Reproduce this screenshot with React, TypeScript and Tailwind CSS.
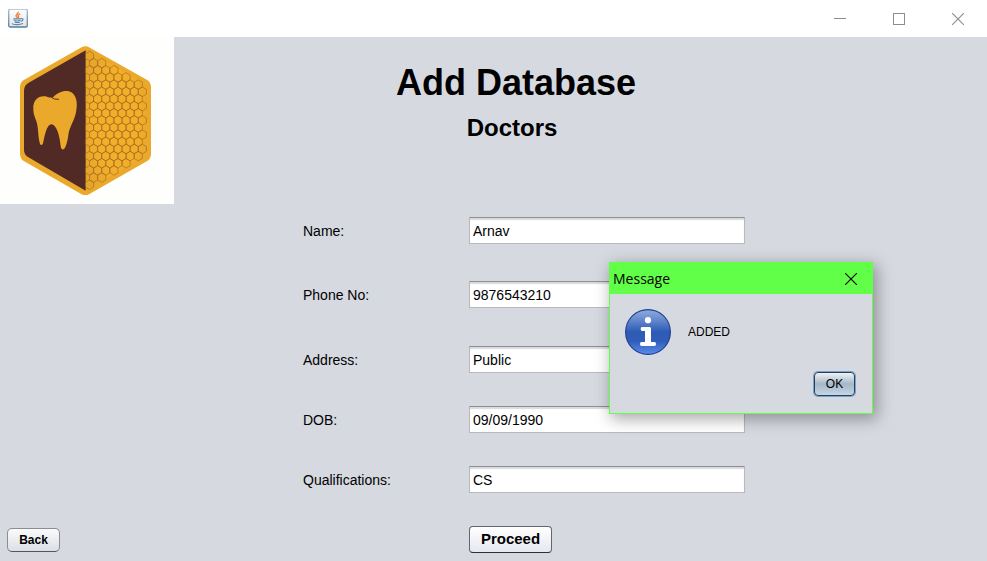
import React, { useState } from "react";

const CELLS_PER_ROW = [1, 2, 4, 5, 7, 7, 7, 7, 7, 7, 7, 7, 7, 7, 7, 5, 4, 2, 1];

function cellPath(cx: number, cy: number) {
  return `M${cx} ${cy - 14.3}L${cx + 12.2} ${cy - 7.1}V${cy + 7.1}L${cx} ${cy + 14.3}L${cx - 12.2} ${cy + 7.1}V${cy - 7.1}Z`;
}

const HONEYCOMB = CELLS_PER_ROW.map((count, row) => {
  const startX = row % 2 === 0 ? 268.5 : 280.7;
  return Array.from({ length: count }, (_, i) => cellPath(startX + i * 24.4, 168 + row * 21.45)).join("");
}).join("");

function ClinicLogo() {
  return (
    <svg viewBox="0 111 522 501" className="block w-[174px] h-[167px] bg-[#fefefd]" role="img" aria-label="Clinic logo">
      <defs>
        <radialGradient id="gold" cx="0.5" cy="0.5" r="0.6">
          <stop offset="0.6" stopColor="#f3af29" />
          <stop offset="1" stopColor="#e6a42a" />
        </radialGradient>
      </defs>
      <path d="M256 164L428 261V462L256 560L85 462V261Z" fill="#eba92c" stroke="#eba92c" strokeWidth="50" strokeLinejoin="round" />
      <path d="M257 151L428 248Q440 256 440 268V454Q440 466 428 474L257 571Z" fill="url(#gold)" />
      <path d="M257 151L86 248Q72 256 72 272V450Q72 464 84 471L257 572Z" fill="#522a25" />
      <path d={HONEYCOMB} fill="none" stroke="#a06a1f" strokeWidth="1.9" />
      <path
        d="M100 327C98 297 120 284 141 290C150 293 155 294 161 290C174 276 198 267 214 277C231 288 233 311 228 337C222 366 208 380 205 405C202 428 197 442 192 447C187 451 183 446 182 438C179 408 171 376 155 373C139 374 134 409 129 430C126 438 121 436 119 428C113 402 116 382 108 361C102 345 100 338 100 327Z"
        fill="#eba92c"
      />
      <path d="M154 292Q162 299 177 298" fill="none" stroke="#522a25" strokeWidth="3" />
    </svg>
  );
}

function JavaIcon() {
  return (
    <svg viewBox="0 0 20 20" className="block size-5" aria-hidden="true">
      <defs>
        <linearGradient id="tile" x2="0" y2="1">
          <stop offset="0" stopColor="#ffffff" />
          <stop offset="1" stopColor="#dfe3e8" />
        </linearGradient>
        <linearGradient id="tileEdge" x2="0" y2="1">
          <stop offset="0" stopColor="#a9bccb" />
          <stop offset="1" stopColor="#577b9a" />
        </linearGradient>
      </defs>
      <rect x="0.7" y="0.2" width="18.6" height="17.8" rx="1.6" fill="url(#tile)" stroke="url(#tileEdge)" strokeWidth="1.3" />
      <path d="M10.2 2.8C11 4.8 7 5.6 8.2 7.4L9.3 8.9M12.3 4.9C9.5 6 9.6 6.9 10.6 7.9L10 9.1" fill="none" stroke="#ee8642" strokeWidth="1.5" />
      <path d="M5.3 9.9H13M6 11.5Q9 12.5 12.4 11.5M6.8 13.2Q9 13.9 11.8 13.2M13 9.7C16 8.9 15.5 11.9 12.6 12.3M4 14.5C5 16 12.5 16 15 14.4" fill="none" stroke="#5d87a8" strokeWidth="1.1" />
    </svg>
  );
}

function InfoIcon() {
  return (
    <svg viewBox="0 0 46 46" className="block size-[46px]" aria-hidden="true">
      <defs>
        <linearGradient id="info" x2="0" y2="1">
          <stop offset="0" stopColor="#90acdf" />
          <stop offset="0.25" stopColor="#5f86cb" />
          <stop offset="0.5" stopColor="#2d5bb5" />
          <stop offset="0.7" stopColor="#2f5db9" />
          <stop offset="1" stopColor="#5b8ceb" />
        </linearGradient>
      </defs>
      <circle cx="23" cy="23" r="22.4" fill="url(#info)" stroke="#1f3f8f" strokeWidth="1.1" />
      <circle cx="23" cy="11.2" r="3.1" fill="#fff" />
      <path d="M17 18H24.5Q26 18 26 19.5V33H29.5Q31 33 31 35Q31 37 29.5 37H16.5Q15 37 15 35Q15 33 16.5 33H20V22H17Q15.7 22 15.7 20Q15.7 18 17 18Z" fill="#fff" />
    </svg>
  );
}

function CloseGlyph() {
  return (
    <svg viewBox="0 0 12 12" className="block size-3" aria-hidden="true">
      <path d="M0 0L12 12M12 0L0 12" stroke="currentColor" strokeWidth="1.1" />
    </svg>
  );
}

function TitleBar() {
  return (
    <header className="flex h-[37px] shrink-0 items-center justify-between bg-white pl-2 text-[#8c8c8c]">
      <JavaIcon />
      <div className="flex h-9">
        <button type="button" aria-label="Minimize" className="flex w-[59px] items-center justify-center">
          <span className="h-px w-3 bg-current" />
        </button>
        <button type="button" aria-label="Maximize" className="flex w-[59px] items-center justify-center">
          <span className="size-3 border border-current" />
        </button>
        <button type="button" aria-label="Close window" className="flex w-[59px] items-center justify-center">
          <CloseGlyph />
        </button>
      </div>
    </header>
  );
}

type FieldProps = { id: string; label: string; value: string; gap: string };

function Field({ id, label, value, gap }: FieldProps) {
  return (
    <div className={`flex items-center ${gap}`}>
      <label htmlFor={id} className="w-[166px] text-sm">
        {label}
      </label>
      <input
        id={id}
        type="text"
        defaultValue={value}
        className="h-[27px] w-[276px] border border-[#b9b9bb] border-t-[#8d8e91] bg-white px-[3px] text-sm shadow-[inset_0_2px_1px_#d9dadd] outline-none"
      />
    </div>
  );
}

function MessageDialog({ onClose }: { onClose: () => void }) {
  return (
    <section
      role="dialog"
      aria-labelledby="dialog-title"
      className="absolute top-[225px] left-[609px] w-[264px] border border-[#62ff48] bg-[#d6d9e0] shadow-[3px_4px_15px_1px_rgba(0,0,0,0.34)]"
    >
      <div className="flex h-[31px] items-center justify-between bg-[#62ff48] pr-[15px] pl-[3px]">
        <h2 id="dialog-title" className="font-['Open_Sans',sans-serif] text-sm">
          Message
        </h2>
        <button type="button" aria-label="Close message" onClick={onClose}>
          <CloseGlyph />
        </button>
      </div>
      <div className="flex items-center gap-[17px] px-[15px] pt-[15px] text-xs">
        <InfoIcon />
        <p>ADDED</p>
      </div>
      <div className="flex justify-end px-[17px] py-[17px]">
        <button
          type="button"
          onClick={onClose}
          className="h-6 w-[41px] rounded-[4px] border border-[#2b4057] bg-linear-to-b from-[#f0f3f7] via-[#a5b7c8] to-[#c4d6e6] text-xs ring-1 ring-[#73a4d1]"
        >
          OK
        </button>
      </div>
    </section>
  );
}

export default function App() {
  const [open, setOpen] = useState(true);
  return (
    <div className="flex min-h-screen flex-col bg-[#d6d9e0] font-['Liberation_Sans',Arial,sans-serif] text-black">
      <TitleBar />
      <div className="relative flex flex-1">
        <aside className="flex w-[174px] shrink-0 flex-col justify-between">
          <ClinicLogo />
          <div className="px-[7px] pb-[9px]">
            <button
              type="button"
              className="h-6 w-[53px] rounded-[5px] border border-[#8a8d93] border-b-[#53565c] bg-linear-to-b from-[#fbfbfc] to-[#dcdfe6] text-xs font-bold"
            >
              Back
            </button>
          </div>
        </aside>
        <main className="flex-1 pl-[129px]">
          <div className="w-[426px] pt-6 pb-[74px] text-center font-bold">
            <h1 className="text-4xl leading-[44px]">Add Database</h1>
            <p className="pt-2 pr-2 text-2xl leading-[30px]">Doctors</p>
          </div>
          <form onSubmit={(e) => e.preventDefault()}>
            <Field id="name" label="Name:" value="Arnav" gap="mb-[37px]" />
            <Field id="phone" label="Phone No:" value="9876543210" gap="mb-[38px]" />
            <Field id="address" label="Address:" value="Public" gap="mb-[33px]" />
            <Field id="dob" label="DOB:" value="09/09/1990" gap="mb-[33px]" />
            <Field id="qualifications" label="Qualifications:" value="CS" gap="mb-[33px]" />
            <div className="pl-[166px]">
              <button
                type="submit"
                className="block h-[27px] w-[83px] rounded-[4px] border border-[#64666b] border-b-[#2d2f33] bg-linear-to-b from-white to-[#e6e8f0] text-[15px] font-bold"
              >
                Proceed
              </button>
            </div>
          </form>
        </main>
        {open && <MessageDialog onClose={() => setOpen(false)} />}
      </div>
    </div>
  );
}
